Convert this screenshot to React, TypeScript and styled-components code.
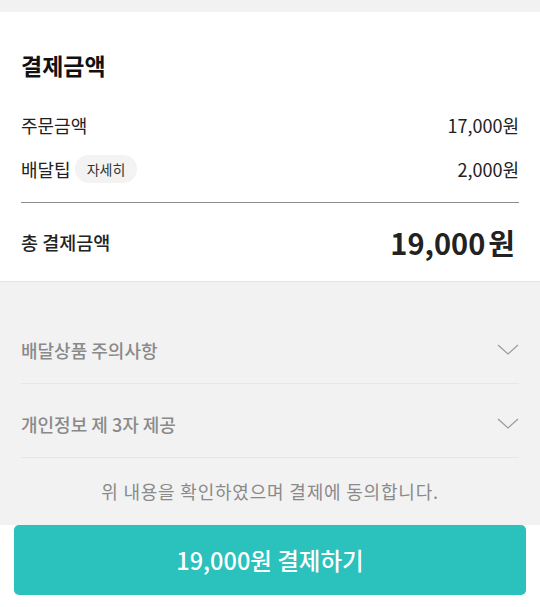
import styled, { createGlobalStyle } from "styled-components";

const GlobalStyle = createGlobalStyle`
  body {
    margin: 0;
    background: #ffffff;
    font-family: "Noto Sans CJK KR", "Noto Sans", sans-serif;
    color: #222;
  }
`;

const accordions = ["배달상품 주의사항", "개인정보 제 3자 제공"];

function Chevron() {
  return (
    <svg width="22" height="12" viewBox="0 0 22 12" fill="none">
      <polyline points="1,1 11,10 21,1" stroke="#9a9a9a" strokeWidth="1.2" />
    </svg>
  );
}

export default function App() {
  return (
    <>
      <GlobalStyle />
      <Page>
        <TopStrip />
        <Summary>
          <Title>결제금액</Title>
          <Row>
            <Label>주문금액</Label>
            <Amount>17,000원</Amount>
          </Row>
          <Row>
            <Label>
              배달팁
              <Pill>자세히</Pill>
            </Label>
            <Amount>2,000원</Amount>
          </Row>
          <Divider />
          <TotalRow>
            <TotalLabel>총 결제금액</TotalLabel>
            <TotalAmount>
              19,000<Won>원</Won>
            </TotalAmount>
          </TotalRow>
        </Summary>
        <Notices>
          {accordions.map((item) => (
            <AccordionItem key={item}>
              <AccordionLabel>{item}</AccordionLabel>
              <Chevron />
            </AccordionItem>
          ))}
          <Agreement>위 내용을 확인하였으며 결제에 동의합니다.</Agreement>
        </Notices>
        <Footer>
          <PayButton>19,000원 결제하기</PayButton>
        </Footer>
      </Page>
    </>
  );
}

const Page = styled.div`
  display: flex;
  flex-direction: column;
  width: 540px;
`;

const TopStrip = styled.div`
  height: 12px;
  background: #f2f2f2;
`;

const Summary = styled.section`
  display: flex;
  flex-direction: column;
  padding: 36px 21px 0;
  background: #fff;
  border-bottom: 1px solid #e4e4e4;
`;

const Title = styled.h2`
  margin: 0 0 21px;
  font-size: 23px;
  line-height: 34px;
  font-weight: 700;
  color: #111;
`;

const Row = styled.div`
  display: flex;
  align-items: center;
  justify-content: space-between;
  height: 44px;
`;

const Label = styled.div`
  display: flex;
  align-items: center;
  gap: 4px;
  font-size: 18px;
  color: #222;
`;

const Pill = styled.span`
  display: inline-flex;
  align-items: center;
  height: 28px;
  padding: 0 12px;
  border-radius: 14px;
  background: #f3f3f3;
  font-size: 14px;
  color: #333;
`;

const Amount = styled.span`
  font-size: 18px;
  color: #222;
`;

const Divider = styled.hr`
  margin: 11px 0 0;
  border: 0;
  border-top: 1px solid #8c8c8c;
`;

const TotalRow = styled.div`
  display: flex;
  align-items: center;
  justify-content: space-between;
  height: 78px;
`;

const TotalLabel = styled.span`
  font-size: 18.5px;
  font-weight: 500;
  color: #222;
`;

const TotalAmount = styled.span`
  font-size: 29px;
  font-weight: 700;
  color: #222;
  padding-right: 4px;
`;

const Won = styled.span`
  margin-left: 3px;
`;

const Notices = styled.section`
  display: flex;
  flex-direction: column;
  padding: 28px 21px 22px;
  background: #f2f2f2;
`;

const AccordionItem = styled.div`
  display: flex;
  align-items: center;
  justify-content: space-between;
  padding: 26px 0 19px;
  border-bottom: 1px solid #e6e6e6;
`;

const AccordionLabel = styled.span`
  font-size: 18px;
  line-height: 28px;
  font-weight: 500;
  color: #8a8a8a;
`;

const Agreement = styled.p`
  margin: 21px 0 0;
  text-align: center;
  font-size: 18px;
  line-height: 24px;
  letter-spacing: 0.8px;
  color: #8a8a8a;
`;

const Footer = styled.div`
  padding: 0 14px 12px;
  background: #fff;
`;

const PayButton = styled.button`
  display: flex;
  align-items: center;
  justify-content: center;
  width: 100%;
  height: 70px;
  border: 0;
  border-radius: 5px;
  background: #2bc1bc;
  color: #fff;
  font-family: inherit;
  font-size: 23.5px;
  font-weight: 500;
`;
